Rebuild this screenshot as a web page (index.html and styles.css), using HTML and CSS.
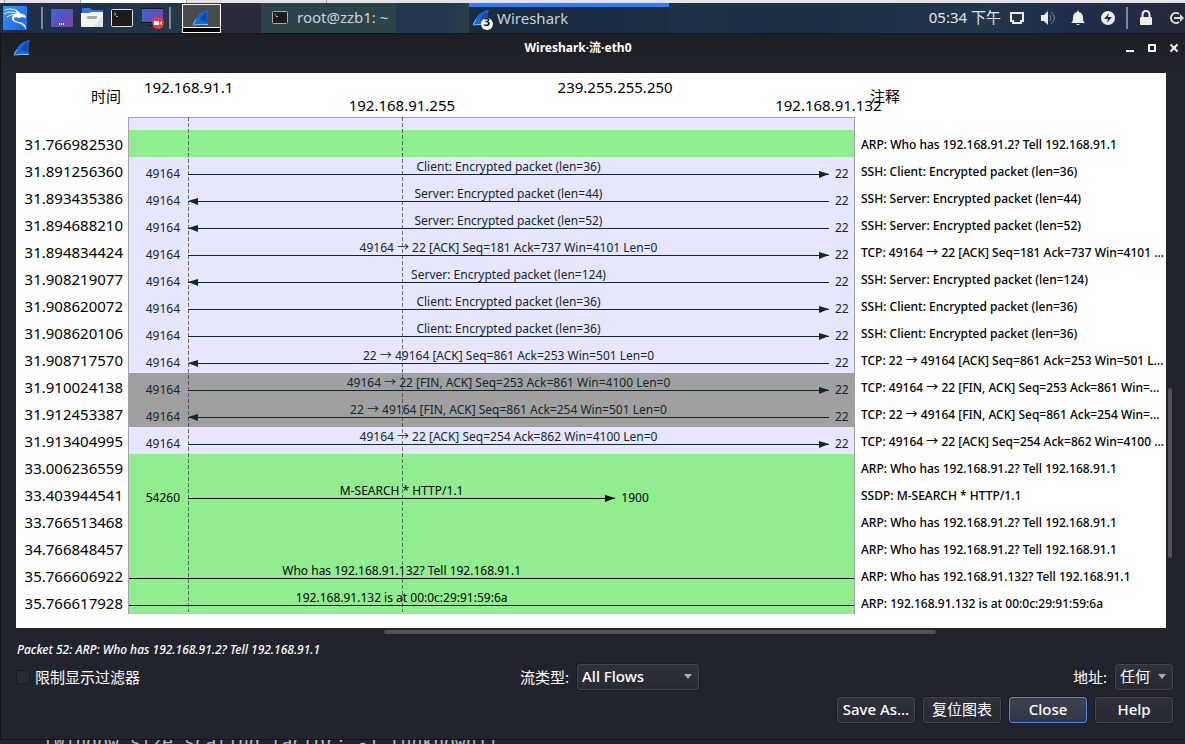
FILE: index.html
```html
<!DOCTYPE html>
<html lang="zh-CN">
<head>
<meta charset="utf-8">
<title>Wireshark·流·eth0</title>
<link rel="stylesheet" href="styles.css">
</head>
<body>
<div class="host-strip"><i class="seg"></i><i class="seg seg-wide"></i><i class="seg seg-light"></i><i class="seg seg-narrow"></i><i class="seg seg-rest"></i></div>

<header class="taskbar">
  <nav class="launchers">
    <button class="launch" aria-label="Menu">
      <svg width="26" height="26" viewBox="0 0 26 26"><defs><linearGradient id="kali" x1="0" y1="0" x2="1" y2="1"><stop offset="0" stop-color="#2f9bff"/><stop offset="1" stop-color="#1f5df5"/></linearGradient></defs><rect x="1" y="1" width="24" height="24" rx="1" fill="url(#kali)"/><path d="M3 5c5-2 9-1 13 2M2 9c5-3 10-2 14 0M5 12c3-2 6-3 10-2" fill="none" stroke="#fff" stroke-width="1"/><path d="M13 4c2 1 4 3 5 4l5 2 1 3-4-1-3 1c-3-1-5-1-5 1 0 3 8 2 11 6 1 2 1 4 1 5-2-5-5-6-8-7-4-1-6-2-6-5 0-2 2-4 5-4z" fill="#fff"/></svg>
    </button>
    <span class="divider"></span>
    <button class="launch" aria-label="Desktop">
      <svg width="24" height="20" viewBox="0 0 24 20"><defs><linearGradient id="desk" x1="0" y1="0" x2="1" y2="0.6"><stop offset="0" stop-color="#3467dc"/><stop offset="1" stop-color="#7546a8"/></linearGradient></defs><rect x="1" y="1" width="22" height="18" fill="url(#desk)"/><path d="M9 16h6" stroke="#fff" stroke-width="2" stroke-dasharray="1 1"/></svg>
    </button>
    <button class="launch" aria-label="Files">
      <svg width="24" height="22" viewBox="0 0 24 22"><path d="M2 2q0-1 1-1h7l2 2h10q1 0 1 1v6H2z" fill="#3478e8"/><path d="M1 6h8l2-1h12v14q0 1-1 1H2q-1 0-1-1z" fill="#f4f4f4"/><path d="M23 8v12h-10z" fill="#e3e3e3"/><rect x="7" y="9" width="10" height="3" rx="1" fill="#aaa"/></svg>
    </button>
    <button class="launch" aria-label="Terminal">
      <svg width="24" height="20" viewBox="0 0 24 20"><rect x="1.500" y="1.500" width="21" height="17" rx="1" fill="#1c1c1c" stroke="#e0e0dc"/><path d="M4 4.500l2 1.500-2 1.500M6 8.500h2" fill="none" stroke="#aaa"/></svg>
    </button>
    <button class="launch" aria-label="Recorder">
      <svg width="26" height="22" viewBox="0 0 26 22"><rect x="3" y="2" width="21" height="14" fill="url(#desk)"/><path d="M3 1.500h21M2 15.500h12M9 18.500h6" stroke="#111722"/><circle cx="19" cy="16" r="6" fill="#f03535"/><path d="M15 14h5v4h-5zM20 16l3-2v4z" fill="#fff"/></svg>
    </button>
    <span class="divider"></span>
    <button class="launch launch-active" aria-label="Wireshark">
      <svg width="20" height="18" viewBox="0 0 20 18"><use href="#fin"/></svg>
    </button>
  </nav>
  <button class="task task-term">
    <svg width="16" height="13" viewBox="0 0 16 13"><rect x=".5" y=".5" width="15" height="12" rx="1" fill="#1c1c1c" stroke="#a8aaa8"/><path d="M2.500 3l1.500 1.500M4 5.500h2" stroke="#bbb"/></svg>
    <span>root@zzb1: ~</span>
  </button>
  <button class="task task-shark">
    <svg width="22" height="22" viewBox="0 0 22 22"><g id="fin"><path d="M1 15.500C4 8 8 2 17 1c-2 4-2 10-1 14.500z" fill="#1468d8"/><path d="M8 11c1-4 4-7 7-8-1 4-1 7 0 10-3-1-5-2-7-2z" fill="#0b4bb4"/><path d="M1 15.500c1-2 2-3 3-5M1 16q8-1 15-.5" stroke="#8fc0f5" fill="none"/></g><circle cx="15" cy="15" r="6" fill="#fff"/></svg>
    <span class="badge">3</span>
    <span>Wireshark</span>
  </button>
  <div class="tray">
    <time class="clock">05:34 下午</time>
    <svg class="tray-display" width="14" height="14" viewBox="0 0 14 14"><path d="M1 2h12v8h-2v2H3v-2H1z" fill="none" stroke="#eee" stroke-width="2"/></svg>
    <svg class="tray-sound" width="16" height="16" viewBox="0 0 16 16"><path d="M1 5h3l4-4v14l-4-4H1z" fill="#eee"/><path d="M10 5q2 3 0 6M11 2q7 6 0 12" fill="none" stroke="#77809a"/></svg>
    <svg class="tray-bell" width="16" height="16" viewBox="0 0 16 16"><path d="M8 0l1 2q4 1 4 6 0 4 2 5H1q2-1 2-5 0-5 4-6zM6 14h4q-2 2-4 0z" fill="#eee"/></svg>
    <svg class="tray-power" width="16" height="16" viewBox="0 0 16 16"><circle cx="8" cy="8" r="7" fill="#eee"/><path d="M9 3L4 9h4l-1 4 5-6H8z" fill="#22304a"/></svg>
    <span class="divider"></span>
    <svg class="tray-lock" width="14" height="16" viewBox="0 0 14 16"><path d="M3.500 8V5q0-4 3.500-4t3.500 4v3" fill="none" stroke="#eee" stroke-width="2"/><rect x="1" y="7" width="12" height="8" rx="1" fill="#eee"/></svg>
    <svg class="tray-exit" width="16" height="14" viewBox="0 0 16 14"><path d="M10 3a5 5 0 1 0 0 8" fill="none" stroke="#ddd" stroke-width="2"/><path d="M5 6h6V3l4 4-4 4V8H5z" fill="#ddd"/></svg>
  </div>
</header>

<main class="window">
  <div class="titlebar">
    <svg class="title-icon" width="18" height="18" viewBox="0 0 18 18"><use href="#fin"/></svg>
    <h1 class="title">Wireshark·流·eth0</h1>
    <div class="controls">
      <button class="ctl" aria-label="Minimize"><svg width="10" height="10" viewBox="0 0 10 10"><path d="M1 8h8" stroke="#fff" stroke-width="2"/></svg></button>
      <button class="ctl" aria-label="Maximize"><svg width="10" height="10" viewBox="0 0 10 10"><rect x="2" y="2" width="6" height="6" fill="none" stroke="#fff" stroke-width="2"/></svg></button>
      <button class="ctl" aria-label="Close window"><svg width="10" height="10" viewBox="0 0 10 10"><path d="M1.500 1.500l7 7M8.500 1.500l-7 7" stroke="#fff" stroke-width="2"/></svg></button>
    </div>
  </div>

  <div class="viewport">
    <section class="flow">
      <div class="head">
        <span class="head-time">时间</span>
        <div class="hosts">
          <span class="host">192.168.91.1</span>
          <span class="host host-low">192.168.91.255</span>
          <span class="host">239.255.255.250</span>
          <span class="host host-low">192.168.91.132</span>
        </div>
        <span class="head-note">注释</span>
      </div>
      <div class="rows">
        <div class="row row-lead"><span class="time"></span><div class="lane tcp"></div><span class="note"></span></div>
        <div class="row"><span class="time">31.766982530</span><div class="lane arp"></div><span class="note">ARP: Who has 192.168.91.2? Tell 192.168.91.1</span></div>
        <div class="row"><span class="time">31.891256360</span><div class="lane tcp"><span class="src">49164</span><div class="arrow right">Client: Encrypted packet (len=36)</div><span class="dst">22</span></div><span class="note">SSH: Client: Encrypted packet (len=36)</span></div>
        <div class="row"><span class="time">31.893435386</span><div class="lane tcp"><span class="src">49164</span><div class="arrow left">Server: Encrypted packet (len=44)</div><span class="dst">22</span></div><span class="note">SSH: Server: Encrypted packet (len=44)</span></div>
        <div class="row"><span class="time">31.894688210</span><div class="lane tcp"><span class="src">49164</span><div class="arrow left">Server: Encrypted packet (len=52)</div><span class="dst">22</span></div><span class="note">SSH: Server: Encrypted packet (len=52)</span></div>
        <div class="row"><span class="time">31.894834424</span><div class="lane tcp"><span class="src">49164</span><div class="arrow right">49164 → 22 [ACK] Seq=181 Ack=737 Win=4101 Len=0</div><span class="dst">22</span></div><span class="note">TCP: 49164 → 22 [ACK] Seq=181 Ack=737 Win=4101 …</span></div>
        <div class="row"><span class="time">31.908219077</span><div class="lane tcp"><span class="src">49164</span><div class="arrow left">Server: Encrypted packet (len=124)</div><span class="dst">22</span></div><span class="note">SSH: Server: Encrypted packet (len=124)</span></div>
        <div class="row"><span class="time">31.908620072</span><div class="lane tcp"><span class="src">49164</span><div class="arrow right">Client: Encrypted packet (len=36)</div><span class="dst">22</span></div><span class="note">SSH: Client: Encrypted packet (len=36)</span></div>
        <div class="row"><span class="time">31.908620106</span><div class="lane tcp"><span class="src">49164</span><div class="arrow right">Client: Encrypted packet (len=36)</div><span class="dst">22</span></div><span class="note">SSH: Client: Encrypted packet (len=36)</span></div>
        <div class="row"><span class="time">31.908717570</span><div class="lane tcp"><span class="src">49164</span><div class="arrow left">22 → 49164 [ACK] Seq=861 Ack=253 Win=501 Len=0</div><span class="dst">22</span></div><span class="note">TCP: 22 → 49164 [ACK] Seq=861 Ack=253 Win=501 L…</span></div>
        <div class="row"><span class="time">31.910024138</span><div class="lane fin"><span class="src">49164</span><div class="arrow right">49164 → 22 [FIN, ACK] Seq=253 Ack=861 Win=4100 Len=0</div><span class="dst">22</span></div><span class="note">TCP: 49164 → 22 [FIN, ACK] Seq=253 Ack=861 Win=…</span></div>
        <div class="row"><span class="time">31.912453387</span><div class="lane fin"><span class="src">49164</span><div class="arrow left">22 → 49164 [FIN, ACK] Seq=861 Ack=254 Win=501 Len=0</div><span class="dst">22</span></div><span class="note">TCP: 22 → 49164 [FIN, ACK] Seq=861 Ack=254 Win=…</span></div>
        <div class="row"><span class="time">31.913404995</span><div class="lane tcp"><span class="src">49164</span><div class="arrow right">49164 → 22 [ACK] Seq=254 Ack=862 Win=4100 Len=0</div><span class="dst">22</span></div><span class="note">TCP: 49164 → 22 [ACK] Seq=254 Ack=862 Win=4100 …</span></div>
        <div class="row"><span class="time">33.006236559</span><div class="lane arp"></div><span class="note">ARP: Who has 192.168.91.2? Tell 192.168.91.1</span></div>
        <div class="row"><span class="time">33.403944541</span><div class="lane arp"><span class="src">54260</span><div class="arrow right short">M-SEARCH * HTTP/1.1</div><span class="dst">1900</span></div><span class="note">SSDP: M-SEARCH * HTTP/1.1</span></div>
        <div class="row"><span class="time">33.766513468</span><div class="lane arp"></div><span class="note">ARP: Who has 192.168.91.2? Tell 192.168.91.1</span></div>
        <div class="row"><span class="time">34.766848457</span><div class="lane arp"></div><span class="note">ARP: Who has 192.168.91.2? Tell 192.168.91.1</span></div>
        <div class="row"><span class="time">35.766606922</span><div class="lane arp through"><span class="src"></span><div class="arrow short">Who has 192.168.91.132? Tell 192.168.91.1</div></div><span class="note">ARP: Who has 192.168.91.132? Tell 192.168.91.1</span></div>
        <div class="row row-last"><span class="time">35.766617928</span><div class="lane arp through"><span class="src"></span><div class="arrow short">192.168.91.132 is at 00:0c:29:91:59:6a</div></div><span class="note">ARP: 192.168.91.132 is at 00:0c:29:91:59:6a</span></div>
        <div class="guides"><i></i><i></i></div>
      </div>
    </section>
    <div class="scroll-v"><i></i></div>
    <div class="scroll-h"><i></i></div>
  </div>

  <p class="status">Packet 52: ARP: Who has 192.168.91.2? Tell 192.168.91.1</p>

  <div class="options">
    <label class="check"><input type="checkbox">限制显示过滤器</label>
    <div class="field">
      <label for="flow-type">流类型:</label>
      <span class="combo"><select id="flow-type" class="select-flow"><option>All Flows</option></select><svg width="8" height="5" viewBox="0 0 8 5"><path d="M0 0h8L4 5z" fill="#a9abb0"/></svg></span>
    </div>
    <div class="field field-end">
      <label for="address">地址:</label>
      <span class="combo"><select id="address" class="select-address"><option>任何</option></select><svg width="8" height="5" viewBox="0 0 8 5"><path d="M0 0h8L4 5z" fill="#a9abb0"/></svg></span>
    </div>
  </div>

  <div class="actions">
    <button class="btn">Save As…</button>
    <button class="btn btn-cjk">复位图表</button>
    <button class="btn btn-default">Close</button>
    <button class="btn">Help</button>
  </div>
</main>
<footer class="behind">[Window size scaling factor: -1 (unknown)]</footer>
</body>
</html>
```
FILE: styles.css
```css
* { box-sizing: border-box; }
body {
  margin: 0;
  min-height: 100vh;
  display: flex;
  flex-direction: column;
  background: #22242d;
  color: #fff;
  font: 15px/20px "Noto Sans", "Noto Sans CJK SC", sans-serif;
}
button, select, input { font: inherit; color: inherit; }
button { border: 0; padding: 0; background: none; }
svg { display: block; flex: none; }

.host-strip { display: flex; gap: 1px; height: 3px; background: #a9a9ad; }
.seg { width: 4px; background: #e4e4e8; }
.seg-wide { width: 75px; }
.seg-light { width: 105px; background: #fff; }
.seg-narrow { width: 139px; }
.seg-rest { flex: 1; }

.taskbar {
  display: flex;
  height: 31px;
  background: linear-gradient(100deg, #202e48 0, #1f3146 90px, #24394a 180px, #213449 460px, #1d2f43 800px, #22364c 980px, #1f2d4a 1060px, #232a40 1140px, #242633 100%);
  border-bottom: 1px solid #131419;
}
.launchers { display: flex; align-items: center; width: 261px; padding-left: 2px; background: linear-gradient(90deg, transparent 219px, #2b2c3b 219px); }
.launch { display: flex; justify-content: center; width: 30px; }
.launch:first-child { width: 26px; }
.divider { width: 2px; height: 22px; background: #7f8896; }
.launchers .divider { margin: 0 4px 0 13px; }
.launchers .launch + .divider ~ .divider { margin: 0 11px 0 2px; }
.launch-active {
  width: 39px;
  height: 29px;
  padding-top: 4px;
  background: #4a4a4a;
  border: 1px solid #fff;
  box-shadow: inset 0 -4px #000, inset 0 -5px #fff;
}
.task { display: flex; align-items: center; padding-bottom: 2px; color: #c9d1d8; text-align: left; }
.task-term { width: 208px; gap: 9px; padding-left: 11px; background: linear-gradient(90deg, #2b4349 0, #2b4349 65%, #243850 65%, #243850 90%, #294049 100%); }
.task-shark {
  position: relative;
  width: 200px;
  gap: 3px;
  padding: 0 0 5px 3px;
  border-top: 4px solid #2a7bff;
  background: linear-gradient(90deg, #192c3b, #182b40 60%, #1d2e42);
}
.task-shark svg { margin-top: 5px; }
.badge { position: absolute; left: 13px; top: 7px; width: 10px; text-align: center; color: #000; font-size: 11px; font-weight: 700; line-height: 16px; }
.tray { display: flex; align-items: center; margin-left: auto; }
.clock { margin-right: 9px; padding-bottom: 2px; white-space: nowrap; color: #e1e6ec; }
.tray-display { margin-right: 16px; }
.tray-sound { margin-right: 14px; }
.tray-bell { margin-right: 14px; }
.tray-power { margin-right: 10px; }
.tray-lock { margin: 0 16px 0 11px; }

.window {
  flex: 1;
  display: flex;
  flex-direction: column;
  border-left: 1px solid #131419;
  border-bottom: 1px solid #131419;
  background: linear-gradient(#1c1e24 0, #22242d 38px);
}
.titlebar { display: grid; grid-template-columns: 1fr auto 1fr; height: 39px; padding: 4px 6px 0 12px; }
.title-icon { margin-top: 1px; }
.title { margin: 0 36px 0 0; font-size: 12px; font-weight: 700; line-height: 20px; }
.controls { display: flex; justify-content: flex-end; align-items: flex-start; gap: 12px; padding-top: 5px; }

.viewport { display: grid; grid-template-columns: minmax(0, 1fr) 19px; grid-template-rows: auto 12px; padding-left: 15px; }
.flow { background: #fff; color: #000; padding-bottom: 16px; }
.head, .row { display: grid; grid-template-columns: 112px minmax(0, 1fr) 311px; }
.head { height: 44px; }
.head-time { padding: 13px 7px 0 0; text-align: right; }
.head-note { padding: 13px 0 0 15px; }
.hosts { display: grid; grid-template-columns: repeat(4, minmax(0, 1fr)); margin: 0 -80px 0 -46px; white-space: nowrap; }
.host { justify-self: center; padding-top: 4px; }
.host-low { padding-top: 22px; }

.rows { position: relative; font-size: 12px; line-height: 20px; white-space: nowrap; }
.row { height: 27px; }
.row-lead { height: 13px; }
.row-last { height: 23px; }
.time { padding: 4px 5px 0 0; text-align: right; font-size: 15px; }
.note { padding: 5px 0 0 6px; font-weight: 500; }
.lane {
  display: grid;
  grid-template-columns: 59px minmax(0, 1fr) 25px;
  border-left: 1px solid #a3a3ac;
  border-right: 1px solid #a3a3ac;
  color: #12272e;
}
.row-lead .lane { border-top: 1px solid #a3a3ac; }
.tcp { background: #e6e6ff; }
.fin { background: #a0a0a0; }
.arp { background: #90ee90; color: #000; }
.lane:has(.short) { grid-template-columns: 59px minmax(0, 2fr) minmax(0, 1fr) 25px; }
.src { padding: 7px 8px 0 0; text-align: right; }
.dst { padding: 7px 0 0 6px; }
.arrow { position: relative; height: 18px; border-bottom: 1px solid currentColor; text-align: center; }
.right::after, .left::after {
  content: "";
  position: absolute;
  bottom: -4px;
  border: solid transparent;
  border-width: 3px 0 4px;
}
.right::after { right: 0; border-left: 10px solid currentColor; }
.left::after { left: 0; border-right: 10px solid currentColor; }
.through { background: linear-gradient(#000, #000) 0 16px / 100% 1px no-repeat #90ee90; }
.through .arrow { border: 0; line-height: 18px; }

.guides {
  position: absolute;
  inset: 0 311px 0 112px;
  display: grid;
  grid-template-columns: 1fr 2fr;
  padding: 0 26px 0 60px;
  pointer-events: none;
}
.guides i { width: 1px; background: repeating-linear-gradient(rgba(30, 35, 50, 0.6) 0 4px, transparent 4px 6px); }

.scroll-v { padding: 315px 0 0 2px; }
.scroll-v i { display: block; width: 4px; height: 170px; border-radius: 2px; background: #505257; }
.scroll-h { padding-top: 2px; }
.scroll-h i { display: block; width: 48%; height: 4px; margin-left: 32%; border-radius: 2px; background: #505257; }

.status { margin: 0; padding-left: 16px; font-size: 12px; font-style: italic; font-weight: 500; line-height: 20px; }
.options { display: grid; grid-template-columns: 504px 1fr auto; align-items: center; padding: 4px 12px 0 15px; }
.check { display: flex; align-items: center; gap: 5px; }
.check input { appearance: none; width: 14px; height: 14px; margin: 0; border: 1px solid #1a1b21; background: #262833; }
.field { display: flex; align-items: center; gap: 8px; }
.combo { position: relative; }
.combo svg { position: absolute; right: 7px; top: 10px; }
.combo select, .btn {
  height: 26px;
  border: 1px solid #42454d;
  border-radius: 3px;
  background: linear-gradient(#2f323b, #272a33);
  box-shadow: 0 0 0 1px #1b1c22;
}
.combo select { display: block; appearance: none; padding: 0 4px 2px; font-weight: 500; line-height: 20px; }
.select-flow { width: 122px; }
.combo .select-address { width: 58px; font-weight: 400; }

.actions { display: flex; justify-content: flex-end; gap: 8px; padding: 7px 12px 16px; }
.btn { min-width: 78px; padding: 0 4px 2px; font-weight: 500; line-height: 20px; }
.btn-cjk { font-weight: 400; }
.btn-default { border-color: #4a86ec; background: linear-gradient(#3d4250, #323746); }

.behind {
  height: 4px;
  overflow: hidden;
  padding-left: 43px;
  font: 18px/4px "DejaVu Sans Mono", monospace;
  color: #b9bcc2;
  white-space: nowrap;
}
```
